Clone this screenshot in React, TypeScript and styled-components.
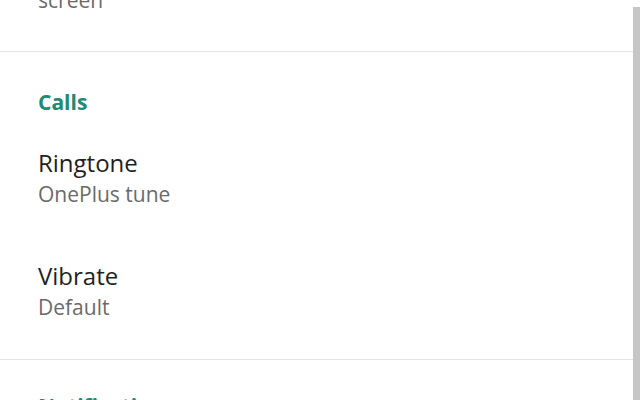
import React from 'react';
import styled, { createGlobalStyle } from 'styled-components';

const GlobalStyle = createGlobalStyle`
  html, body {
    margin: 0;
    padding: 0;
    background: #ffffff;
    overflow: hidden;
  }
  body {
    font-family: "Open Sans", "Liberation Sans", sans-serif;
  }
`;

const Screen = styled.div`
  position: relative;
  width: 640px;
  height: 400px;
  overflow: hidden;
  background: #ffffff;
`;

const Tail = styled.div`
  padding: 0 38px 37px;
`;

const Summary = styled.div<{ $offset?: number }>`
  margin-top: ${(p) => p.$offset ?? 2}px;
  font-size: 21px;
  line-height: 28px;
  color: #6a6a6a;
`;

const Divider = styled.div`
  height: 1px;
  background: #e4e4e4;
`;

const Section = styled.section<{ $top: number }>`
  padding: ${(p) => p.$top}px 38px 11px;
`;

const Header = styled.h3`
  margin: 0 0 8px;
  font-size: 21px;
  line-height: 24px;
  font-weight: 700;
  color: #218a74;
`;

const Row = styled.div`
  padding: 26px 0 27px;
`;

const Title = styled.div`
  font-size: 24px;
  line-height: 30px;
  color: #1f1f1f;
`;

const Scrollbar = styled.div`
  position: absolute;
  top: 7px;
  right: 0;
  bottom: 0;
  width: 7px;
  background: #c6c6c6;
`;

const items = [
  { title: 'Ringtone', summary: 'OnePlus tune' },
  { title: 'Vibrate', summary: 'Default' },
];

export default function App() {
  return (
    <Screen>
      <GlobalStyle />
      <Tail>
        <Summary $offset={-14}>screen</Summary>
      </Tail>
      <Divider />
      <Section $top={38}>
        <Header>Calls</Header>
        {items.map((it) => (
          <Row key={it.title}>
            <Title>{it.title}</Title>
            <Summary>{it.summary}</Summary>
          </Row>
        ))}
      </Section>
      <Divider />
      <Section $top={34}>
        <Header>Notifications</Header>
      </Section>
      <Scrollbar />
    </Screen>
  );
}
